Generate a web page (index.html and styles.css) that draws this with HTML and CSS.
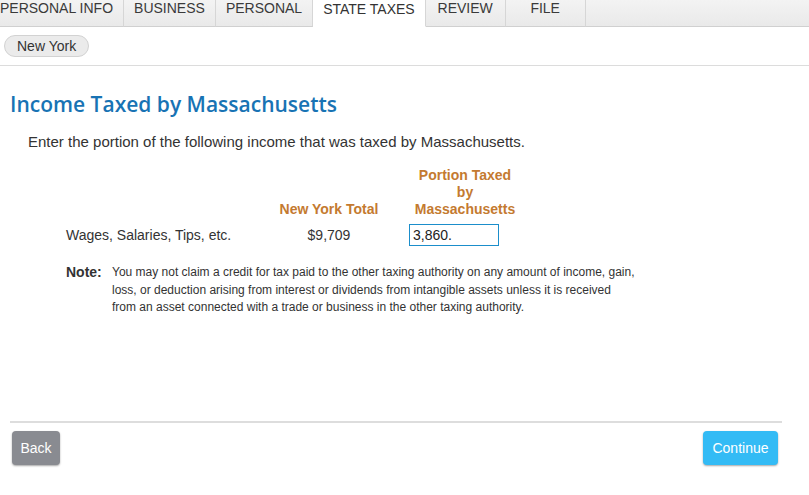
FILE: index.html
```html
<!DOCTYPE html>
<html lang="en">
    <head>
        <meta name="viewport" content="width=device-width">
        <title>State Taxes - Income Taxed by Massachusetts</title>
        <link rel="stylesheet" href="styles.css">
    </head>

    <body>

        <div id="tabs">
            <div class="tab">PERSONAL INFO</div>
            <div class="tab">BUSINESS</div>
            <div class="tab">PERSONAL</div>
            <div class="tab active">STATE TAXES</div>
            <div class="tab">REVIEW</div>
            <div class="tab">FILE</div>
            <div class="tab-rest"></div>
        </div>

        <div id="subnav">
            <span class="pill">New York</span>
        </div>

        <div id="main">
            <h1 class="title">Income Taxed by Massachusetts</h1>

            <p class="intro">Enter the portion of the following income that was taxed by Massachusetts.</p>

            <table class="income">
                <tr>
                    <th class="label-col"></th>
                    <th class="total-col">New York Total</th>
                    <th class="portion-col">Portion Taxed<br>by<br>Massachusetts</th>
                </tr>
                <tr>
                    <td class="label-col">Wages, Salaries, Tips, etc.</td>
                    <td class="total-col">$9,709</td>
                    <td class="portion-col"><input class="amount" type="text" value="3,860."></td>
                </tr>
            </table>

            <div class="note">
                <span class="note-head">Note:</span>
                <span class="note-text">You may not claim a credit for tax paid to the other taxing authority on any amount of income, gain, loss, or deduction arising from interest or dividends from intangible assets unless it is received from an asset connected with a trade or business in the other taxing authority.</span>
            </div>
        </div>

        <div id="footer">
            <button class="btn back">Back</button>
            <button class="btn continue">Continue</button>
        </div>

    </body>
</html>
```

FILE: styles.css
```css
* {
    margin: 0;
    padding: 0;
    box-sizing: border-box;
}

html, body {
    height: 100%;
    overflow: hidden;
}

body {
    background-color: #ffffff;
    color: #333333;
    font-family: "Liberation Sans", Arial, sans-serif;
    font-size: 14px;
}

/* top tabs */
#tabs {
    display: flex;
    height: 27px;
    margin-left: -10px;
    background: linear-gradient(#f3f3f3, #e9e9e9);
}

.tab {
    min-width: 80px;
    padding: 0 10px;
    line-height: 17px;
    text-align: center;
    color: #3a3a3a;
    border-right: 1px solid #d6d6d6;
    border-bottom: 1px solid #d0d0d0;
}

.tab.active {
    background: #ffffff;
    border-bottom-color: #ffffff;
    color: #333333;
    line-height: 19px;
}

.tab-rest {
    flex: 1;
    border-bottom: 1px solid #d0d0d0;
}

/* state pills */
#subnav {
    padding: 8px 4px 8px;
    border-bottom: 1px solid #dcdcdc;
}

.pill {
    display: inline-block;
    height: 22px;
    line-height: 20px;
    padding: 0 12px;
    border: 1px solid #d2d2d2;
    border-radius: 11px;
    background-color: #ebebeb;
    color: #333333;
}

#main {
    padding: 0 10px;
    height: 330px;
}

.title {
    margin-top: 25px;
    font-family: "Open Sans", sans-serif;
    font-weight: 600;
    font-size: 21px;
    line-height: 27px;
    color: #1873b4;
}

.intro {
    margin: 14px 0 0 18px;
    font-size: 15px;
    line-height: 20px;
}

.income {
    margin: 15px 0 0 56px;
    border-collapse: collapse;
}

.income th {
    font-size: 14px;
    line-height: 17px;
    color: #c47a30;
    vertical-align: bottom;
    font-weight: bold;
}

.income td {
    padding-top: 6px;
    vertical-align: middle;
}

.label-col {
    width: 183px;
    text-align: left;
}

.total-col {
    width: 160px;
    text-align: center;
}

.income th.portion-col {
    width: 112px;
    text-align: center;
}

.income td.portion-col {
    text-align: left;
}

.amount {
    width: 90px;
    height: 22px;
    padding: 0 3px;
    border: 1px solid #1b8ecb;
    font-family: "Liberation Sans", Arial, sans-serif;
    font-size: 14px;
    color: #222222;
    outline: none;
}

.note {
    display: flex;
    margin: 18px 0 0 56px;
    font-size: 12px;
    line-height: 17.5px;
}

.note-head {
    width: 46px;
    flex-shrink: 0;
    font-weight: bold;
    font-size: 14px;
}

.note-text {
    width: 525px;
}

/* bottom buttons */
#footer {
    display: flex;
    justify-content: space-between;
    margin: 0 27px 0 10px;
    padding: 8px 4px 0 2px;
    border-top: 2px solid #dddddd;
}

.btn {
    height: 34px;
    padding: 0 6px;
    border: none;
    border-radius: 4px;
    color: #ffffff;
    font-family: "Liberation Sans", Arial, sans-serif;
    font-size: 14px;
    box-shadow: 0 1px 2px rgba(0, 0, 0, 0.35);
}

.back {
    width: 48px;
    background-color: #898b91;
}

.continue {
    width: 75px;
    background-color: #33bbf5;
}
```
